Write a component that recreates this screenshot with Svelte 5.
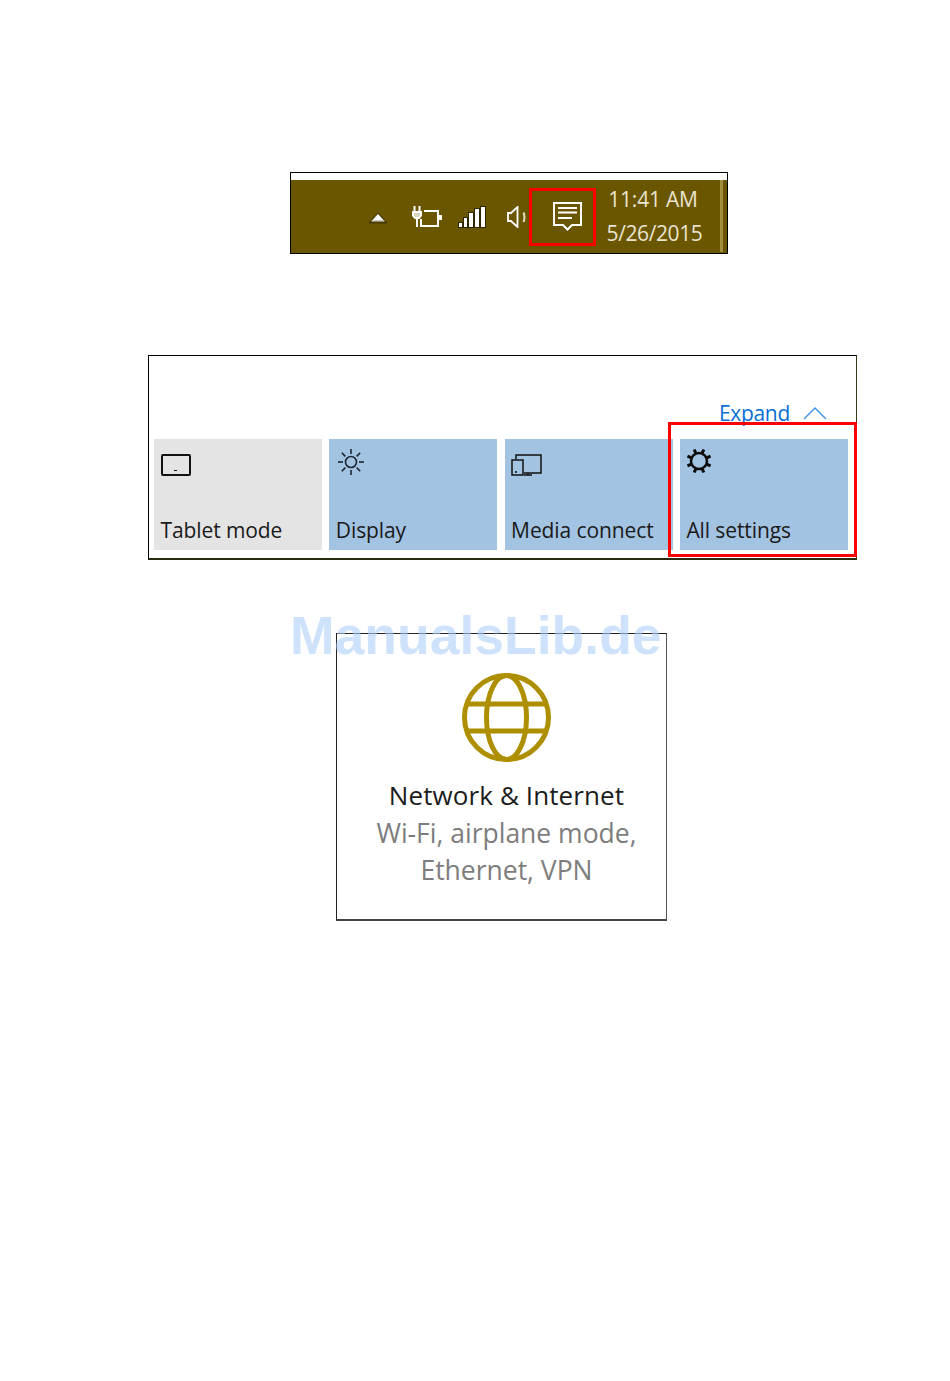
<script>
  const tiles = [
    { label: 'Tablet mode', icon: 'tablet', off: true },
    { label: 'Display', icon: 'sun' },
    { label: 'Media connect', icon: 'media' },
    { label: 'All settings', icon: 'gear' }
  ]
  // sun and gear rays
  const rays = [0, 45, 90, 135, 180, 225, 270, 315]
  // signal bars, low to high
  const bars = [
    { x: 2, y: 18, w: 3, h: 4 },
    { x: 7, y: 13, w: 3, h: 9 },
    { x: 12, y: 8, w: 4, h: 14 },
    { x: 18, y: 4, w: 4, h: 18 },
    { x: 24, y: 2, w: 4, h: 20 }
  ]
</script>

<div class="page">
  <div class="taskbar">
    <div class="strip"></div>
    <div class="tray">
      <svg class="caret" width="18" height="13" viewBox="0 0 18 13">
        <path d="M1 11.500L9 3l8 8.500z" fill="#2e2600" opacity="0.6" stroke="#2e2600" stroke-width="2" />
        <path d="M2.500 10L9 3l6.500 7z" fill="#fff" />
        <path d="M2.500 10h13" stroke="#b9b4a0" stroke-width="1.500" />
      </svg>
      <svg class="plug" width="31" height="22" viewBox="0 0 31 22" fill="none" stroke="#fff" stroke-width="2">
        <path d="M3.500 0v6M8.500 0v6M6 12v9" />
        <path d="M2 6h8v3.500l-2 2.500H4L2 9.500z" fill="#d8d4c0" />
        <path d="M13 5h14v15H10v-7" />
        <rect x="28" y="9" width="3" height="5" fill="#fff" stroke="none" />
      </svg>
      <svg class="signal" width="30" height="24" viewBox="0 0 30 24" fill="#fff" stroke="#2e2600" stroke-width="2" paint-order="stroke">
        {#each bars as b}
          <rect x={b.x} y={b.y} width={b.w} height={b.h} />
        {/each}
      </svg>
      <svg class="speaker" width="19" height="22" viewBox="0 0 19 22" fill="none" stroke="#fff" stroke-width="1.800">
        <path d="M1 7h3L10.500 1v20L4 15H1z" />
        <path d="M16.500 6.500q2 4.500 0 9.500" stroke="#e4dfc4" stroke-width="2" />
      </svg>
      <div class="notes">
        <svg width="30" height="31" viewBox="0 0 30 31" fill="none" stroke="#fff" stroke-width="2">
          <path d="M1 2h27v22H19l-4.500 4.500-4.500-4.500H1z" />
          <path d="M5 7h19M5 11.500h19M5 17h14" />
        </svg>
      </div>
      <div class="clock">
        <span>11:41 AM</span>
        <span class="date">5/26/2015</span>
      </div>
      <div class="accent"></div>
    </div>
  </div>

  <div class="panel">
    <div class="expand">
      <span>Expand</span>
      <svg width="24" height="14" viewBox="0 0 24 14" fill="none" stroke="#4a96e6" stroke-width="1.500"><path d="M1 13L12 2l11 11" /></svg>
    </div>
    <div class="tiles">
      {#each tiles as t}
        <div class="tile" class:off={t.off}>
          {#if t.icon === 'tablet'}
            <svg class="low" width="30" height="22" viewBox="0 0 30 22" fill="none" stroke="#111" stroke-width="2"><rect x="1" y="1" width="28" height="20" rx="1" /><path d="M13 16.500h3" stroke-width="1" /></svg>
          {:else if t.icon === 'sun'}
            <svg width="30" height="28" viewBox="0 0 30 28" fill="none" stroke="#1c2530" stroke-width="1.600">
              <circle cx="15" cy="14" r="5.500" />
              {#each rays as r}
                <path d="M15 1v5" transform="rotate({r} 15 14)" />
              {/each}
            </svg>
          {:else if t.icon === 'media'}
            <svg class="low" width="31" height="22" viewBox="0 0 31 22" fill="none" stroke="#111" stroke-width="1.500">
              <path d="M5 5V1h25v18H13M1 6h11v15H1zM4 18h2M13 21h8M17 19v2" />
            </svg>
          {:else}
            <svg width="26" height="26" viewBox="0 0 26 26" fill="none" stroke="#0c0c0c">
              <circle cx="13" cy="13" r="8" stroke-width="2.500" />
              {#each rays as r}
                <path d="M13 0.500v4" stroke-width="3" transform="rotate({r + 22.5} 13 13)" />
              {/each}
            </svg>
          {/if}
          <span>{t.label}</span>
        </div>
      {/each}
    </div>
    <div class="highlight"></div>
  </div>

  <div class="card">
    <svg width="90" height="90" viewBox="0 0 90 90" fill="none" stroke="#ae8f00" stroke-width="5">
      <circle cx="44.500" cy="44.500" r="42" />
      <ellipse cx="44.500" cy="44.500" rx="20" ry="42" />
      <path d="M5 31h79M5 58h79" />
    </svg>
    <h2>Network &amp; Internet</h2>
    <p>Wi-Fi, airplane mode,<br />Ethernet, VPN</p>
  </div>

  <div class="watermark">ManualsLib.de</div>
</div>

<style>
  :global(body) {
    margin: 0;
    background: #fff;
  }

  .page {
    position: relative;
    box-sizing: border-box;
    width: 950px;
    height: 1381px;
    padding-top: 172px;
    font-family: 'Open Sans', 'Noto Sans', sans-serif;
    overflow: hidden;
  }

  /* taskbar */
  .taskbar {
    box-sizing: border-box;
    width: 438px;
    height: 82px;
    margin-left: 290px;
    border: 1px solid #000;
    background: #6b5600;
  }

  .strip {
    height: 7px;
    background: #fff;
  }

  .tray {
    display: flex;
    align-items: center;
    height: 72px;
    padding-left: 78px;
  }

  .caret {
    margin-top: 2px;
  }

  .plug {
    margin-left: 24px;
    margin-top: 1px;
  }

  .signal {
    margin-left: 15px;
    margin-top: 1px;
  }

  .speaker {
    margin-left: 20px;
    margin-top: 1px;
  }

  .notes {
    box-sizing: border-box;
    display: flex;
    align-items: center;
    justify-content: flex-start;
    width: 67px;
    height: 58px;
    margin-left: 3px;
    margin-top: 1px;
    padding-left: 21px;
    border: 3px solid #f00;
  }

  .clock {
    display: flex;
    flex-direction: column;
    align-items: center;
    width: 110px;
    margin: 0 12px 0 2px;
    font-size: 21px;
    line-height: 33px;
    color: #e9e4cf;
    letter-spacing: -0.2px;
  }

  .date {
    margin-left: 3px;
    letter-spacing: -0.4px;
    transform: translateY(1px);
  }

  .accent {
    align-self: stretch;
    width: 3px;
    background: #a3903f;
  }

  /* quick actions */
  .panel {
    position: relative;
    box-sizing: border-box;
    width: 709px;
    height: 205px;
    margin: 101px 0 0 148px;
    border: 1px solid #000;
    border-right-color: #3a3618;
    border-bottom: 2px solid #2b2b12;
    background: #fff;
  }

  .expand {
    display: flex;
    align-items: center;
    justify-content: flex-end;
    gap: 13px;
    height: 83px;
    box-sizing: border-box;
    padding: 30px 29px 0 0;
    font-size: 21px;
    color: #0a6fd4;
    letter-spacing: -0.3px;
  }

  .tiles {
    display: grid;
    grid-template-columns: repeat(4, 168px);
    column-gap: 7.3px;
    padding-left: 5px;
  }

  .tile {
    box-sizing: border-box;
    display: flex;
    flex-direction: column;
    justify-content: space-between;
    align-items: flex-start;
    height: 111px;
    padding: 9px 7px 5px 6.500px;
    background: #a2c3e1;
    font-size: 21px;
    line-height: 30px;
    color: #1a1a1a;
    letter-spacing: -0.1px;
  }

  .tile.off {
    background: #e4e4e4;
  }

  .low {
    margin-top: 6px;
  }

  .highlight {
    position: absolute;
    left: 519px;
    top: 66px;
    width: 189px;
    height: 135px;
    box-sizing: border-box;
    border: 3px solid #f00;
  }

  /* settings card */
  .card {
    box-sizing: border-box;
    display: flex;
    flex-direction: column;
    align-items: center;
    width: 331px;
    height: 288px;
    margin: 73px 0 0 336px;
    padding: 39px 0 0 10px;
    border: 1px solid #222;
    border-right-color: #555;
    border-bottom: 2px solid #444;
  }

  h2 {
    margin: 14px 0 0;
    font-size: 26px;
    line-height: 37px;
    font-weight: 400;
    color: #1c1c1c;
    letter-spacing: 0.1px;
  }

  p {
    margin: 1px 0 0;
    font-size: 26.5px;
    line-height: 37px;
    text-align: center;
    color: #7d7d7d;
  }

  .watermark {
    position: absolute;
    left: 290px;
    top: 602px;
    font-family: 'Liberation Sans', Arial, sans-serif;
    font-size: 53.5px;
    line-height: 68px;
    font-weight: 700;
    color: rgba(173, 208, 248, 0.6);
    white-space: nowrap;
  }
</style>
